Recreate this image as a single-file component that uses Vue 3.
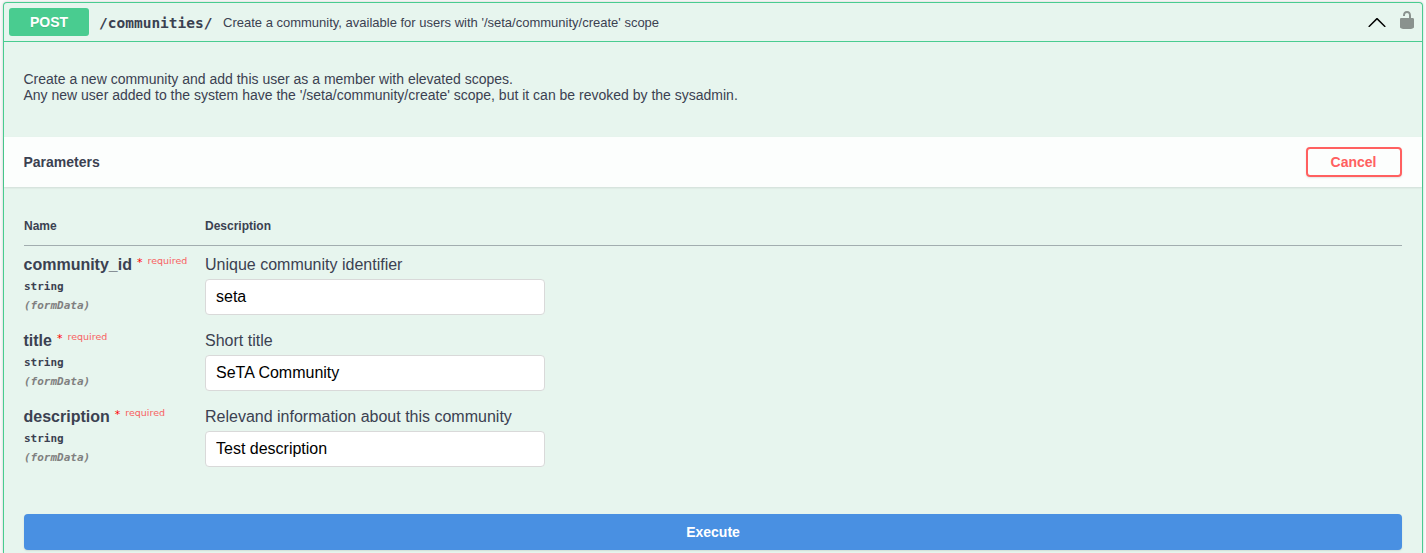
<script setup>
import { ref } from 'vue'

const params = ref([
  { name: 'community_id', description: 'Unique community identifier', value: 'seta' },
  { name: 'title', description: 'Short title', value: 'SeTA Community' },
  { name: 'description', description: 'Relevand information about this community', value: 'Test description' },
])
</script>

<template>
  <section class="opblock">
    <header class="summary">
      <span class="method">POST</span>
      <span class="path">/communities/</span>
      <span class="brief">Create a community, available for users with '/seta/community/create' scope</span>
      <svg class="arrow" viewBox="0 0 20 20" width="20" height="20">
        <path d="M17.418 14.908c.272.268.709.268.979 0s.271-.701 0-.969l-7.908-7.83c-.27-.268-.707-.268-.979 0l-7.908 7.83c-.27.268-.27.701 0 .969.271.268.709.268.979 0L10 7.767l7.418 7.141z" />
      </svg>
      <svg class="lock" viewBox="0 0 20 20" width="20" height="20">
        <path d="M15.8 8H14V5.6C14 2.703 12.665 1 10 1 7.334 1 6 2.703 6 5.6V6h2v-.801C8 3.754 8.797 3 10 3c1.203 0 2 .754 2 2.199V8H4c-.553 0-1 .646-1 1.199V17c0 .549.428 1.139.951 1.307l1.197.387C5.672 18.861 6.55 19 7.1 19h5.8c.549 0 1.428-.139 1.951-.307l1.196-.387c.524-.167.953-.757.953-1.306V9.199C17 8.646 16.352 8 15.8 8z" />
      </svg>
    </header>
    <div class="notes">
      <p>Create a new community and add this user as a member with elevated scopes.</p>
      <p>Any new user added to the system have the '/seta/community/create' scope, but it can be revoked by the sysadmin.</p>
    </div>
    <div class="section-header">
      <h4>Parameters</h4>
      <button class="cancel" type="button">Cancel</button>
    </div>
    <div class="params">
      <div class="row head"><span>Name</span><span>Description</span></div>
      <div v-for="p in params" :key="p.name" class="row param">
        <div>
          <div class="name">{{ p.name }}<span class="star">*</span><span class="required">required</span></div>
          <div class="type">string</div>
          <div class="in">(formData)</div>
        </div>
        <div>
          <div class="desc">{{ p.description }}</div>
          <input v-model="p.value" type="text" />
        </div>
      </div>
    </div>
    <button class="execute" type="button">Execute</button>
  </section>
</template>

<style>
html { background: #fafafa; }
</style>

<style scoped>
* { box-sizing: border-box; }
.opblock {
  margin: 2px 3px 0;
  height: 551px;
  border: 1px solid #49cc90;
  border-bottom: 0;
  border-radius: 4px 4px 0 0;
  background: #e7f5ee;
  box-shadow: 0 0 3px rgba(0, 0, 0, .19);
  color: #3b4151;
  font-family: "Liberation Sans", Arial, sans-serif;
}
.summary {
  display: flex;
  align-items: center;
  height: 39px;
  padding: 0 5px;
  border-bottom: 1px solid #49cc90;
}
.method {
  width: 80px;
  height: 28px;
  border-radius: 3px;
  background: #49cc90;
  color: #fff;
  font-size: 14px;
  font-weight: 700;
  line-height: 28px;
  text-align: center;
  text-shadow: 0 1px 0 rgba(0, 0, 0, .1);
}
.path {
  width: 114px;
  margin-left: 10px;
  padding-top: 2px;
  font: 700 14.5px/18px "DejaVu Sans Mono", monospace;
}
.brief { flex: 1; margin-left: 10px; padding-top: 2px; font-size: 13px; line-height: 16px; }
.arrow { fill: #000; margin-right: 10px; }
.lock { fill: #000; opacity: .4; margin-top: -5px; }
.notes { height: 95px; padding: 29px 20px 0 19.5px; font-size: 14px; line-height: 16px; }
.notes p { margin: 0; }
.section-header {
  display: flex;
  align-items: center;
  justify-content: space-between;
  height: 50px;
  padding: 0 20px 0 19.5px;
  background: rgba(255, 255, 255, .85);
  box-shadow: 0 1px 2px rgba(0, 0, 0, .1);
}
h4 { margin: 0; font-size: 14px; line-height: 16px; }
button { font: 700 14px/16px "Liberation Sans", Arial, sans-serif; border-radius: 4px; box-shadow: 0 1px 2px rgba(0, 0, 0, .1); }
.cancel { width: 96px; height: 30px; padding: 0 1px 0 0; border: 2px solid #ff6060; background: transparent; color: #ff6060; }
.params { padding: 20px 20px 0; }
.row { display: grid; grid-template-columns: 181px 1fr; }
.head {
  height: 39px;
  padding-top: 11px;
  border-bottom: 1px solid rgba(59, 65, 81, .4);
  font-size: 12px;
  font-weight: 700;
  line-height: 16px;
}
.param { height: 76px; padding-top: 9px; }
.name { display: flex; height: 20px; margin-left: -.5px; font-size: 16px; font-weight: 700; line-height: 20px; }
.star { margin-left: 5px; color: #f00; font: 400 11px/15px "DejaVu Sans", sans-serif; }
.required { margin-left: 5px; color: #f86262; font: 400 9.5px/12px "DejaVu Sans", sans-serif; }
.type { padding-top: 4px; font: 700 11px/16px "DejaVu Sans Mono", monospace; }
.in { padding-top: 3px; color: #808080; font: italic 700 11px/16px "DejaVu Sans Mono", monospace; }
.desc { font-size: 16px; line-height: 20px; }
input {
  display: block;
  width: 340px;
  height: 36px;
  margin: 4px 0 0;
  padding: 0 10px;
  border: 1px solid #d9d9d9;
  border-radius: 4px;
  background: #fff;
  color: #000;
  font: 16px "Liberation Sans", Arial, sans-serif;
}
.execute { display: block; width: calc(100% - 40px); height: 36px; margin: 40px 20px 0; padding: 0; border: 0; background: #4990e2; color: #fff; }
</style>
